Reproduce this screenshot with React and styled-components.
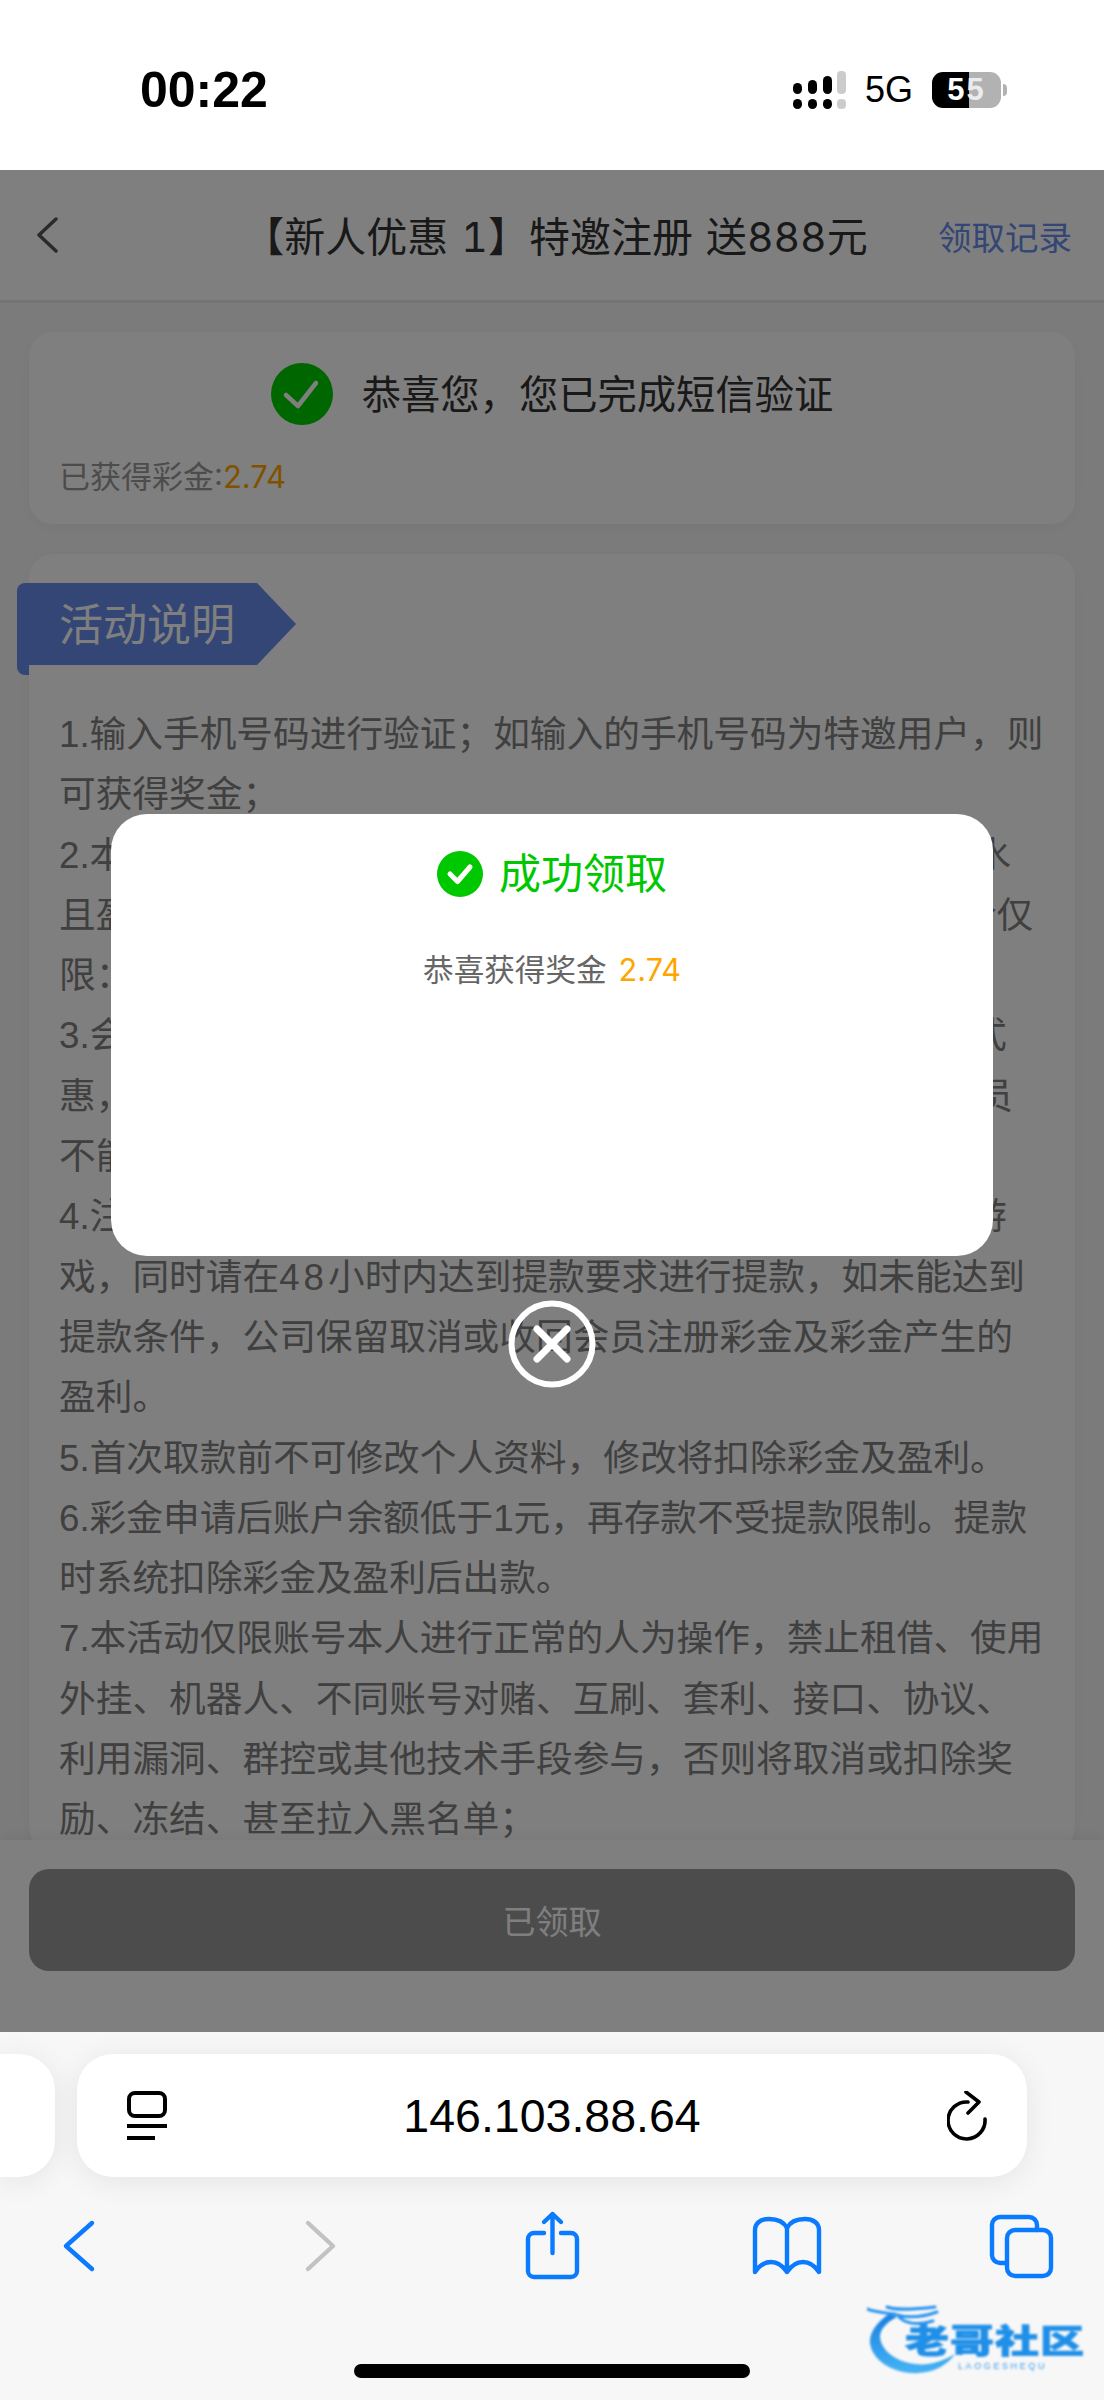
import React from 'react'
import styled, { createGlobalStyle } from 'styled-components'

const SANS = 'Inter, "Noto Sans CJK SC", sans-serif'
const SYSTEM = '"Liberation Sans", sans-serif'
const BLUE = '#0a7aff'

const GlobalStyle = createGlobalStyle`
  html, body { margin: 0; padding: 0; background: #fff; }
  body { font-family: ${SANS}; }
`

const Phone = styled.div`
  position: relative;
  width: 1104px;
  height: 2400px;
  overflow: hidden;
  display: flex;
  flex-direction: column;
  background: #fff;
`

const StatusBar = styled.div`
  height: 170px;
  flex: none;
  box-sizing: border-box;
  padding: 10px 97px 0 140px;
  display: flex;
  align-items: center;
  justify-content: space-between;
  color: #000;
  font-family: ${SYSTEM};
`

const Time = styled.div`
  font-size: 50px;
  font-weight: 700;
  line-height: 1;
`

const StatusRight = styled.div`
  display: flex;
  align-items: center;
  gap: 19px;
`

const Network = styled.div`
  font-size: 36px;
  line-height: 1;
`

const Battery = styled.div`
  position: relative;
  width: 69px;
  height: 36px;
  border-radius: 11px;
  background: linear-gradient(to right, #000 37px, #b2b2b2 37px);
  display: flex;
  align-items: center;
  justify-content: center;
  font-size: 31px;
  font-weight: 700;
  letter-spacing: 2px;
  color: #fff;
  margin-right: 6px;

  span { color: #ececec; }

  &::after {
    content: '';
    position: absolute;
    right: -6px;
    top: 12px;
    width: 4px;
    height: 12px;
    border-radius: 0 6px 6px 0;
    background: #b2b2b2;
  }
`

const WebView = styled.div`
  position: relative;
  height: 1862px;
  flex: none;
  display: flex;
  flex-direction: column;
  background: #f7f7f7;
  overflow: hidden;
`

const Nav = styled.div`
  height: 133px;
  flex: none;
  box-sizing: border-box;
  background: #fff;
  border-bottom: 3px solid #e8e8e8;
  padding: 0 32px 0 36px;
  display: grid;
  grid-template-columns: 1fr auto 1fr;
  align-items: center;
`

const NavTitle = styled.div`
  font-size: 41px;
  line-height: 60px;
  padding-top: 3px;
  margin-left: 3px;
  word-spacing: 2px;
  font-variant-numeric: tabular-nums;
  color: #333;
  white-space: nowrap;
`

const NavLink = styled.div`
  justify-self: end;
  font-size: 33.5px;
  color: #668cea;
`

const Content = styled.div`
  flex: 1;
  min-height: 0;
  overflow: hidden;
  padding: 29px 29px 0;
  display: flex;
  flex-direction: column;
  gap: 30px;
`

const Card = styled.div`
  flex: none;
  background: #fff;
  border-radius: 24px;
  box-shadow: 0 4px 16px rgba(0, 0, 0, 0.04);
`

const ResultCard = styled(Card)`
  height: 192px;
  box-sizing: border-box;
  padding: 30px 30px 0;
`

const ResultRow = styled.div`
  display: flex;
  align-items: center;
  justify-content: center;
  gap: 29px;
`

const ResultText = styled.div`
  font-size: 39.3px;
  line-height: 62px;
  padding-top: 2px;
  color: #333;
`

const Earned = styled.div`
  margin-top: 31px;
  font-size: 31px;
  line-height: 40px;
  color: #999;
`

const Amount = styled.span`
  color: #ffa500;
`

const RulesCard = styled(Card)`
  padding: 29px 30px 0;
`

const Ribbon = styled.div`
  position: relative;
  width: 240px;
  height: 82px;
  margin-left: -42px;
  box-sizing: border-box;
  padding: 3px 0 0 42px;
  background: #668cea;
  border-radius: 8px 0 0 0;
  color: #fff;
  font-size: 44px;
  line-height: 79px;
  white-space: nowrap;

  &::before {
    content: '';
    position: absolute;
    left: 100%;
    top: 0;
    border-left: 39px solid #668cea;
    border-top: 41px solid transparent;
    border-bottom: 41px solid transparent;
  }

  &::after {
    content: '';
    position: absolute;
    left: 0;
    top: 100%;
    width: 12px;
    height: 10px;
    background: #668cea;
    border-radius: 0 0 0 8px;
  }
`

const Rules = styled.div`
  margin-top: 40px;
`

const RuleLine = styled.div`
  font-family: "Liberation Sans", "Noto Sans CJK SC", sans-serif;
  font-size: 36.7px;
  line-height: 60.3px;
  color: #808080;
  white-space: nowrap;
`

const WideDigits = styled.span`
  letter-spacing: 4px;
`

const Footer = styled.div`
  height: 192px;
  flex: none;
  box-sizing: border-box;
  background: #fff;
  padding: 29px 29px 0;
  box-shadow: 0 -4px 12px rgba(0, 0, 0, 0.05);
`

const ClaimedButton = styled.div`
  height: 102px;
  border-radius: 20px;
  background: #999;
  color: #fff;
  font-size: 33px;
  display: flex;
  align-items: center;
  justify-content: center;
`

const Dim = styled.div`
  position: absolute;
  inset: 0;
  background: rgba(0, 0, 0, 0.5);
  display: flex;
  flex-direction: column;
  align-items: center;
  justify-content: center;
  gap: 44px;
`

const Modal = styled.div`
  width: 882px;
  height: 442px;
  box-sizing: border-box;
  padding-top: 37px;
  background: #fff;
  border-radius: 36px;
`

const ModalTitle = styled.div`
  display: flex;
  align-items: center;
  justify-content: center;
  gap: 16px;
  font-size: 42px;
  line-height: 46px;
  color: #00c800;
`

const ModalText = styled.div`
  margin-top: 50px;
  text-align: center;
  font-size: 30.6px;
  line-height: 46px;
  color: #666;

  span { margin-left: 12px; }
`

const BrowserBar = styled.div`
  flex: 1;
  position: relative;
  background: #f7f7f7;
  display: flex;
  flex-direction: column;
`

const PillRow = styled.div`
  display: flex;
  gap: 22px;
  padding-top: 22px;
`

const TabStub = styled.div`
  width: 55px;
  height: 123px;
  background: #fff;
  border-radius: 0 36px 36px 0;
  box-shadow: 0 4px 30px rgba(0, 0, 0, 0.08);
`

const Pill = styled.div`
  width: 950px;
  height: 123px;
  box-sizing: border-box;
  padding: 0 40px 0 50px;
  background: #fff;
  border-radius: 36px;
  box-shadow: 0 4px 30px rgba(0, 0, 0, 0.08);
  display: flex;
  align-items: center;
  justify-content: space-between;
`

const Url = styled.div`
  font-family: ${SYSTEM};
  font-size: 46.5px;
  color: #000;
  margin-right: 10px;
`

const Toolbar = styled.div`
  display: flex;
  justify-content: space-between;
  padding: 33px 41px 0 39px;
`

const HomeBar = styled.div`
  position: absolute;
  left: 354px;
  top: 332px;
  width: 396px;
  height: 14px;
  border-radius: 7px;
  background: #000;
`

const Watermark = styled.div`
  position: absolute;
  left: 867px;
  top: 273px;
  width: 220px;
  height: 70px;
  filter: blur(0.8px);
`

const WatermarkName = styled.div`
  position: absolute;
  left: 38px;
  top: 12px;
  width: 190px;
  font-family: "Noto Sans CJK SC", sans-serif;
  font-size: 44px;
  font-weight: 900;
  line-height: 44px;
  letter-spacing: 1px;
  color: #1f8fe8;
  -webkit-text-stroke: 1px #1f8fe8;
  white-space: nowrap;
  transform: scaleY(0.75);
`

const WatermarkSub = styled.div`
  position: absolute;
  left: 91px;
  top: 56px;
  font-family: ${SYSTEM};
  font-size: 9px;
  line-height: 10px;
  letter-spacing: 2.6px;
  color: #3a9bea;
  white-space: nowrap;
`

const rules = [
  '1.输入手机号码进行验证；如输入的手机号码为特邀用户，则',
  '可获得奖金；',
  '2.本活动彩金需在指定游戏内完成10倍有效投注额度的流水',
  '且盈利达到要求后方可申请提款，单个账号提款金额8倍合仅',
  '限：888元；',
  '3.会员需先绑定手机号码及银行卡后才能申请此活动的优式',
  '惠，每位会员仅限申请一次，同一地址及设备视为同一会员',
  '不能重复申请；',
  '4.注册彩金到账后请在规定时间内前往指定游戏场馆进行游',
  <>戏，同时请在<WideDigits>48</WideDigits>小时内达到提款要求进行提款，如未能达到</>,
  '提款条件，公司保留取消或收回会员注册彩金及彩金产生的',
  '盈利。',
  '5.首次取款前不可修改个人资料，修改将扣除彩金及盈利。',
  '6.彩金申请后账户余额低于1元，再存款不受提款限制。提款',
  '时系统扣除彩金及盈利后出款。',
  '7.本活动仅限账号本人进行正常的人为操作，禁止租借、使用',
  '外挂、机器人、不同账号对赌、互刷、套利、接口、协议、',
  '利用漏洞、群控或其他技术手段参与，否则将取消或扣除奖',
  '励、冻结、甚至拉入黑名单；',
]

const Signal = () => (
  <svg width="53" height="38" viewBox="0 0 53 38">
    <g fill="#000">
      <rect x="0" y="12" width="9" height="11" rx="4.5" />
      <rect x="15" y="9" width="9" height="14" rx="4.5" />
      <rect x="30" y="5" width="9" height="18" rx="4.5" />
      <rect x="0" y="28" width="9" height="10" rx="4.5" />
      <rect x="15" y="28" width="9" height="10" rx="4.5" />
      <rect x="30" y="28" width="9" height="10" rx="4.5" />
    </g>
    <g fill="#cccccc">
      <rect x="44" y="0" width="9" height="23" rx="4" />
      <rect x="44" y="28" width="9" height="10" rx="4" />
    </g>
  </svg>
)

const BackArrow = () => (
  <svg width="22" height="36" viewBox="0 0 22 36" fill="none">
    <path d="M20 2 L3 18 L20 34" stroke="#555" strokeWidth="3.5" strokeLinecap="round" strokeLinejoin="round" />
  </svg>
)

const CheckBadge = ({ size, color, tick, width }) => (
  <svg width={size} height={size} viewBox={`0 0 ${size} ${size}`} fill="none">
    <circle cx={size / 2} cy={size / 2} r={size / 2} fill={color} />
    <path d={tick} stroke="#fff" strokeWidth={width} strokeLinecap="round" strokeLinejoin="round" />
  </svg>
)

const CloseCircle = () => (
  <svg width="88" height="88" viewBox="0 0 88 88" fill="none">
    <circle cx="44" cy="44" r="40.5" stroke="#fff" strokeWidth="6" />
    <path d="M29 29 L59 59 M59 29 L29 59" stroke="#fff" strokeWidth="7" strokeLinecap="round" />
  </svg>
)

const ListIcon = () => (
  <svg width="40" height="50" viewBox="0 0 40 50" fill="none" stroke="#000" strokeWidth="4">
    <rect x="2" y="2" width="36" height="23" rx="6" />
    <path d="M0 35 H40" />
    <path d="M0 47 H28" />
  </svg>
)

const ReloadIcon = () => (
  <svg width="40" height="50" viewBox="0 0 40 50" fill="none" stroke="#000" strokeWidth="3.6" strokeLinecap="round" strokeLinejoin="round">
    <path d="M21 11 A18.5 18.5 0 1 0 38 28" />
    <path d="M19 1 L32 11 L21 22" />
  </svg>
)

const ToolIcon = ({ children, color = BLUE }) => (
  <svg width="80" height="70" viewBox="0 0 80 70" fill="none" stroke={color} strokeWidth="4.4" strokeLinecap="round" strokeLinejoin="round">
    {children}
  </svg>
)

const Dragon = () => (
  <svg width="220" height="70" viewBox="0 0 220 70" style={{ position: 'absolute', left: 0, top: 0 }}>
    <defs>
      <linearGradient id="dragon" x1="0" y1="0" x2="0" y2="1">
        <stop offset="0" stopColor="#1a7fe0" />
        <stop offset="1" stopColor="#45b4f5" />
      </linearGradient>
    </defs>
    <path d="M22 9 C8 18 2 30 3 38 C5 56 28 70 52 68 C68 67 80 60 88 49 C76 56 62 61 48 59 C30 57 14 46 13 32 C13 24 20 17 30 12 Z" fill="url(#dragon)" />
    <path d="M0 4 C10 8 20 8 28 9 M26 9 C42 14 56 12 70 7 M32 12 C40 20 52 20 66 16 M20 2 C30 6 50 4 68 2" stroke="#2a93ee" strokeWidth="3" fill="none" strokeLinecap="round" />
  </svg>
)

const App = () => (
  <Phone>
    <GlobalStyle />
    <StatusBar>
      <Time>00:22</Time>
      <StatusRight>
        <Signal />
        <Network>5G</Network>
        <Battery>5<span>5</span></Battery>
      </StatusRight>
    </StatusBar>

    <WebView>
      <Nav>
        <BackArrow />
        <NavTitle>【新人优惠 1】特邀注册 送888元</NavTitle>
        <NavLink>领取记录</NavLink>
      </Nav>
      <Content>
        <ResultCard>
          <ResultRow>
            <CheckBadge size={62} color="#00cc00" tick="M15 32 L27 43 L45 20" width={4.5} />
            <ResultText>恭喜您，您已完成短信验证</ResultText>
          </ResultRow>
          <Earned>已获得彩金:<Amount>2.74</Amount></Earned>
        </ResultCard>
        <RulesCard>
          <Ribbon>活动说明</Ribbon>
          <Rules>
            {rules.map((line, index) => (
              <RuleLine key={index}>{line}</RuleLine>
            ))}
          </Rules>
        </RulesCard>
      </Content>
      <Footer>
        <ClaimedButton>已领取</ClaimedButton>
      </Footer>
      <Dim>
        <Modal>
          <ModalTitle>
            <CheckBadge size={46} color="#00c800" tick="M13 23 L20.5 30.5 L33 16" width={5} />
            成功领取
          </ModalTitle>
          <ModalText>恭喜获得奖金<Amount as="span">2.74</Amount></ModalText>
        </Modal>
        <CloseCircle />
      </Dim>
    </WebView>

    <BrowserBar>
      <PillRow>
        <TabStub />
        <Pill>
          <ListIcon />
          <Url>146.103.88.64</Url>
          <ReloadIcon />
        </Pill>
      </PillRow>
      <Toolbar>
        <ToolIcon>
          <path d="M53 13 L27 36 L53 59" />
        </ToolIcon>
        <ToolIcon color="#c2c2c2">
          <path d="M33 13 L58 36 L33 59" />
        </ToolIcon>
        <ToolIcon>
          <path d="M33 23 H23 a6 6 0 0 0 -6 6 V61 a6 6 0 0 0 6 6 H60 a6 6 0 0 0 6 -6 V29 a6 6 0 0 0 -6 -6 H50" />
          <path d="M41.5 4 V43 M33 12 L41.5 4 L50 12" />
        </ToolIcon>
        <ToolIcon>
          <path d="M40 18 C37 12 30 9 22 9 C14 9 8 13 8 20 V62 C12 56 18 52 24 52 C31 52 36 56 40 62 C44 56 49 52 56 52 C62 52 68 56 72 62 V20 C72 13 66 9 58 9 C50 9 43 12 40 18 V62" />
        </ToolIcon>
        <ToolIcon>
          <path d="M24 53 H17 a8 8 0 0 1 -8 -8 V15 a8 8 0 0 1 8 -8 H46 a8 8 0 0 1 8 8 V20" />
          <rect x="24" y="20" width="44" height="46" rx="8" />
        </ToolIcon>
      </Toolbar>
      <Watermark>
        <Dragon />
        <WatermarkName>老哥社区</WatermarkName>
        <WatermarkSub>LAOGESHEQU</WatermarkSub>
      </Watermark>
      <HomeBar />
    </BrowserBar>
  </Phone>
)

export default App
